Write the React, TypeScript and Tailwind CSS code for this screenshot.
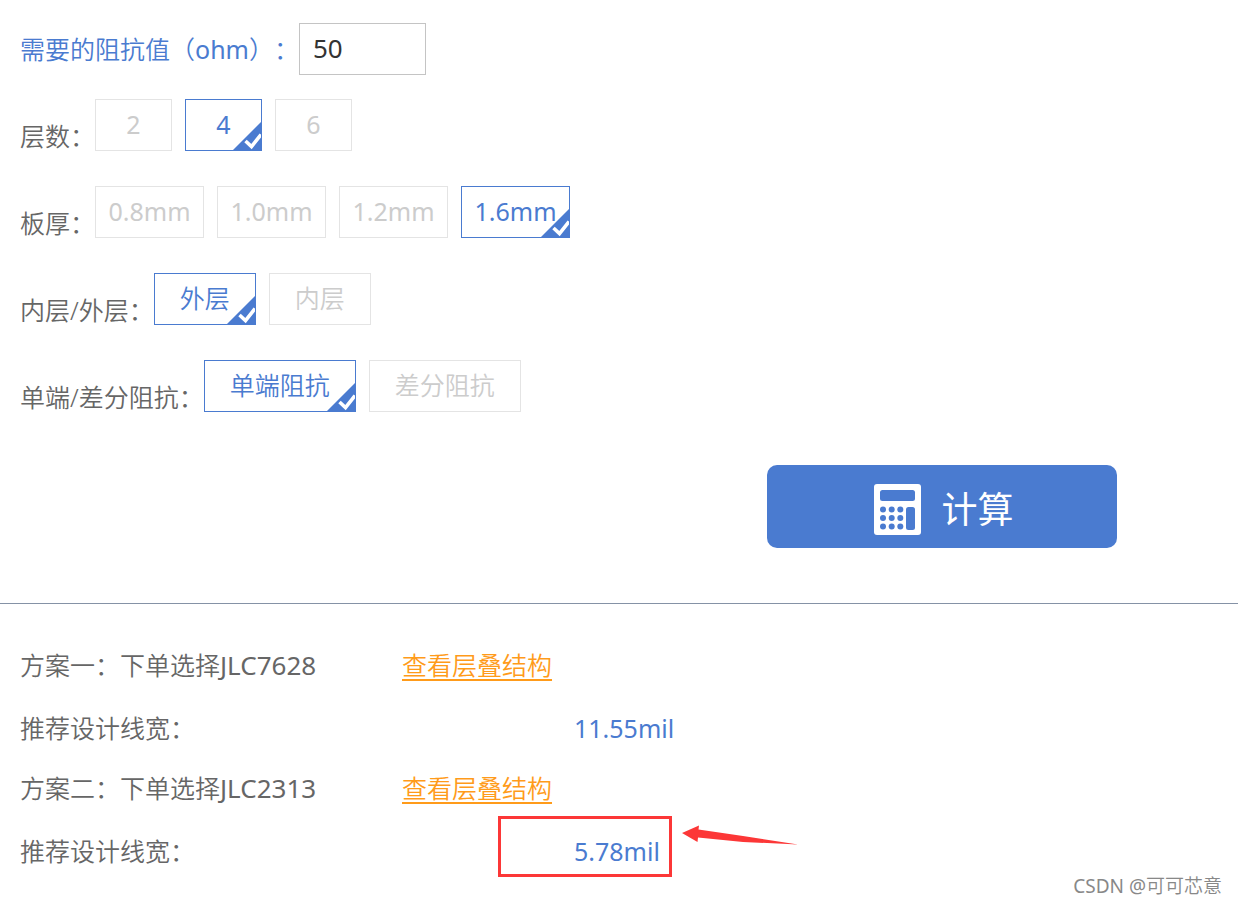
import { useState } from 'react';

const optionGroups = [
  { name: 'layers', label: '层数：', options: ['2', '4', '6'], selected: '4', style: 'w-[77px] font-normal' },
  { name: 'thickness', label: '板厚：', options: ['0.8mm', '1.0mm', '1.2mm', '1.6mm'], selected: '1.6mm', style: 'w-[109px] font-normal' },
  { name: 'position', label: '内层/外层：', options: ['外层', '内层'], selected: '外层', style: 'w-[102px]' },
  { name: 'mode', label: '单端/差分阻抗：', options: ['单端阻抗', '差分阻抗'], selected: '单端阻抗', style: 'w-[152px]' },
];

const schemes = [
  { title: '方案一：下单选择', stack: 'JLC7628', width: '11.55mil', marked: false },
  { title: '方案二：下单选择', stack: 'JLC2313', width: '5.78mil', marked: true },
];

function CheckCorner() {
  return (
    <svg className="absolute right-0 bottom-0 h-7 w-7" viewBox="0 0 28 28">
      <path d="M28 0V28H0Z" fill="#4a7bd0" />
      <path d="M12.500 19L18.500 24.500L28 12.500" fill="none" stroke="#fff" strokeWidth="3.600" />
    </svg>
  );
}

function OptionRow({ group }: { group: (typeof optionGroups)[number] }) {
  const [value, setValue] = useState(group.selected);

  return (
    <div className="flex items-end" role="radiogroup" aria-labelledby={group.name}>
      <span id={group.name} className="leading-[30px] whitespace-nowrap">{group.label}</span>
      <div className="flex gap-[13px]">
        {group.options.map((option) => (
          <label
            key={option}
            className={`relative flex h-[52px] cursor-pointer items-center justify-center border pb-0.5 ${group.style} ${
              value === option ? 'border-[#4a7bd0] text-[#4a7bd0]' : 'border-[#e4e4e4] text-[#ccc]'
            }`}
          >
            <input
              type="radio"
              name={group.name}
              className="absolute inset-0 cursor-pointer appearance-none"
              checked={value === option}
              onChange={() => setValue(option)}
            />
            {option}
            {value === option && <CheckCorner />}
          </label>
        ))}
      </div>
    </div>
  );
}

function CalculatorIcon() {
  return (
    <svg className="h-[51px] w-[47px]" viewBox="0 0 47 51">
      <rect width="47" height="51" rx="3" fill="#fff" />
      <g fill="#4a7bd0">
        <rect x="6" y="6" width="35" height="11" rx="2.5" />
        <rect x="32" y="23" width="9" height="23" rx="2.5" />
        {[25.5, 34, 42.5].map((cy) =>
          [9, 17.7, 26.3].map((cx) => <circle key={`${cx}-${cy}`} cx={cx} cy={cy} r="3" />)
        )}
      </g>
    </svg>
  );
}

function Mark() {
  return (
    <>
      <span className="absolute -top-[21px] -left-[76px] h-[61px] w-[174px] border-3 border-[#fc3737]" />
      <svg className="absolute -top-[13px] left-[107px] h-6 w-[118px]" viewBox="0 0 118 24">
        <path d="M1 9L18 1.500L17.500 5.500L62 12L117 20.500L62 18L17 13.500L16.500 18Z" fill="#fc3737" />
      </svg>
    </>
  );
}

export default function App() {
  const [ohm, setOhm] = useState('50');

  return (
    <div className="relative min-h-screen bg-white font-['Noto_Sans','Noto_Sans_CJK_SC',sans-serif] text-[25px] leading-7 font-[350] text-[#666] [text-spacing-trim:space-all]">
      <form className="border-b border-[#8592a6] px-5 pt-[23px] pb-[55px]" onSubmit={(e) => e.preventDefault()}>
        <div className="mb-6 flex items-center text-[#4a7bd0]">
          <label htmlFor="ohm" className="whitespace-nowrap">
            需要的阻抗值（<span className="font-normal">ohm</span>）：
          </label>
          <input
            id="ohm"
            className="h-[52px] w-[127px] border border-[#c4c4c4] px-[13px] pb-0.5 text-[26px] font-normal text-[#333] outline-none"
            value={ohm}
            onChange={(e) => setOhm(e.target.value)}
          />
        </div>
        <div className="flex flex-col gap-[35px]">
          {optionGroups.map((group) => (
            <OptionRow key={group.name} group={group} />
          ))}
        </div>
        <div className="mt-[53px] flex justify-end pr-[101px]">
          <button
            type="submit"
            className="flex h-[83px] w-[350px] items-center justify-center gap-5 rounded-[10px] bg-[#4a7bd0] pt-1.5 pl-1 text-4xl font-normal text-white"
          >
            <CalculatorIcon />
            计算
          </button>
        </div>
      </form>

      <section className="flex flex-col gap-8 px-5 pt-[47px]">
        {schemes.map((scheme) => (
          <div key={scheme.stack} className="flex flex-col gap-[35px]">
            <div className="flex">
              <span className="w-[382px]">
                {scheme.title}
                <span className="text-[26px] font-normal">{scheme.stack}</span>
              </span>
              <a href="#" className="text-[#ff9b1a] underline decoration-2 underline-offset-4">查看层叠结构</a>
            </div>
            <div className="flex">
              <span className="w-[554px]">推荐设计线宽：</span>
              <span className="relative font-normal text-[#4a7bd0]">
                {scheme.width}
                {scheme.marked && <Mark />}
              </span>
            </div>
          </div>
        ))}
      </section>

      <div className="absolute right-4 bottom-1 text-[19px] text-[#888]">
        <span className="font-normal">CSDN @</span>可可芯意
      </div>
    </div>
  );
}
